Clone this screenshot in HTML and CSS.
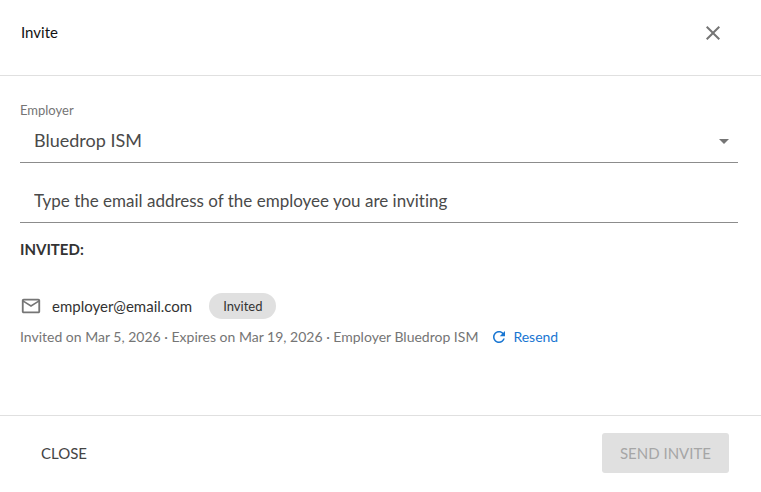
FILE: index.html
```html
<!DOCTYPE html>
<html lang="en">
<head>
  <meta charset="UTF-8" />
  <meta name="viewport" content="width=device-width, initial-scale=1" />
  <title>Invite</title>
  <link rel="stylesheet" href="styles.css">
</head>
<body>
  <div class="dialog" role="dialog" aria-labelledby="dialog-title">
    <header class="dialog-header">
      <h2 id="dialog-title">Invite</h2>
      <button type="button" class="icon-btn" aria-label="Close dialog">
        <svg width="24" height="24" viewBox="0 0 24 24"><path d="M19 6.41 17.59 5 12 10.59 6.41 5 5 6.41 10.59 12 5 17.59 6.41 19 12 13.41 17.59 19 19 17.59 13.41 12z"/></svg>
      </button>
    </header>

    <main class="dialog-body">
      <form id="invite-form">
        <label class="field-label" for="employer">Employer</label>
        <div class="select-wrap">
          <select id="employer" class="field">
            <option selected>Bluedrop ISM</option>
          </select>
          <svg class="arrow" width="24" height="24" viewBox="0 0 24 24"><path d="m7 10 5 5 5-5z"/></svg>
        </div>
        <input type="email" id="email" class="field email-field" aria-label="Employee email address" placeholder="Type the email address of the employee you are inviting" />
      </form>

      <h3 class="section-title">INVITED:</h3>

      <div class="invitee">
        <svg class="mail-icon" width="22" height="22" viewBox="0 0 24 24"><path d="M22 6c0-1.1-.9-2-2-2H4c-1.1 0-2 .9-2 2v12c0 1.1.9 2 2 2h16c1.1 0 2-.9 2-2zm-2 0-8 5-8-5zm0 12H4V8l8 5 8-5z"/></svg>
        <span class="email">employer@email.com</span>
        <span class="chip">Invited</span>
      </div>
      <div class="invite-info">
        <span>Invited on Mar 5, 2026 · Expires on Mar 19, 2026 · Employer Bluedrop ISM</span>
        <button type="button" class="resend-btn">
          <svg width="18" height="18" viewBox="0 0 24 24"><path d="M17.65 6.35C16.2 4.9 14.21 4 12 4c-4.42 0-7.99 3.58-7.99 8s3.57 8 7.99 8c3.73 0 6.84-2.55 7.73-6h-2.08c-.82 2.33-3.04 4-5.65 4-3.31 0-6-2.69-6-6s2.69-6 6-6c1.66 0 3.14.69 4.22 1.78L13 11h7V4z"/></svg>
          Resend
        </button>
      </div>
    </main>

    <footer class="dialog-footer">
      <button type="button" class="btn">CLOSE</button>
      <button type="submit" form="invite-form" class="btn btn-send" disabled>SEND INVITE</button>
    </footer>
  </div>
</body>
</html>
```
FILE: styles.css
```css
* {
  box-sizing: border-box;
}

body {
  margin: 0;
  background: #fff;
  color: #333;
  font-family: Lato, "Open Sans", sans-serif;
  font-variant-ligatures: none;
}

button,
input,
select {
  font-family: inherit;
  font-variant-ligatures: inherit;
}

button {
  border: none;
  background: none;
  cursor: pointer;
}

svg {
  display: block;
  fill: currentColor;
}

.dialog {
  display: flex;
  flex-direction: column;
  min-height: 100vh;
}

.dialog-header {
  display: flex;
  align-items: center;
  justify-content: space-between;
  padding: 13px 28px 22px 21px;
  border-bottom: 1px solid #e0e0e0;
}

.dialog-header h2 {
  margin: 0;
  padding-bottom: 2px;
  font-size: 15px;
  font-weight: 400;
  color: #111;
}

.icon-btn {
  padding: 8px;
  color: #757575;
}

.dialog-body {
  flex: 1;
  padding: 25px 23px 20px 20px;
}

.field-label {
  display: block;
  font-size: 13px;
  line-height: 18px;
  color: #757575;
}

.select-wrap {
  display: grid;
  align-items: center;
}

.select-wrap > * {
  grid-area: 1 / 1;
}

.arrow {
  justify-self: end;
  margin-right: 2px;
  color: #757575;
  pointer-events: none;
}

.field {
  width: 100%;
  height: 44px;
  padding: 0 14px 1px;
  border: none;
  border-bottom: 1px solid #8c8c8c;
  border-radius: 0;
  background: transparent;
  color: #4a4a4a;
  font-size: 18px;
  appearance: none;
  outline: none;
}

.email-field {
  display: block;
  margin-top: 16px;
  font-size: 17px;
}

.field::placeholder {
  color: #4a4a4a;
  opacity: 1;
}

.section-title {
  margin: 15px 0 33px;
  font-size: 15px;
  line-height: 22px;
  font-weight: 700;
}

.invitee {
  display: flex;
  align-items: center;
}

.mail-icon {
  color: #757575;
}

.email {
  margin: 0 17px 0 10px;
  font-size: 15px;
}

.chip {
  padding: 0 14px;
  border-radius: 13px;
  background: #e0e0e0;
  font-size: 13px;
  line-height: 26px;
}

.invite-info {
  display: flex;
  align-items: center;
  margin-top: 8px;
  font-size: 14px;
  line-height: 20px;
  color: #757575;
}

.resend-btn {
  display: flex;
  align-items: center;
  gap: 5px;
  margin-left: 12px;
  padding: 0;
  font-size: 14px;
  line-height: 20px;
  color: #1976d2;
}

.dialog-footer {
  display: flex;
  align-items: center;
  justify-content: space-between;
  padding: 17px 32px 19px 23px;
  border-top: 1px solid #e0e0e0;
}

.btn {
  height: 40px;
  padding: 0 18px;
  border-radius: 3px;
  color: #444;
  font-size: 15px;
}

.btn-send {
  background: #e0e0e0;
  color: #a6a6a6;
  cursor: default;
}
```
